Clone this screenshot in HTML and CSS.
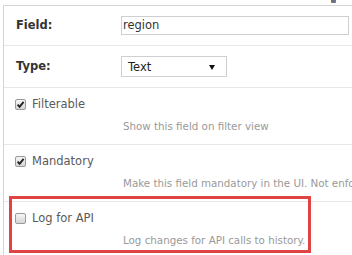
FILE: index.html
```html
<!DOCTYPE html>
<html>
<head>
<meta charset="utf-8">
<link rel="stylesheet" href="styles.css">
</head>
<body>
<div class="topicon"></div>
<div class="panel">
  <div class="row field-row first">
    <label class="flabel">Field:</label>
    <div class="text-input">region</div>
  </div>
  <div class="row field-row second">
    <label class="flabel">Type:</label>
    <div class="select"><span>Text</span><span class="arrow"></span></div>
  </div>
  <div class="row check-row">
    <div class="check-line"><span class="cb checked"><svg viewBox="0 0 11 11" width="11" height="11"><path d="M2.6 5.6 L4.6 7.8 L8.6 2.8" fill="none" stroke="#222" stroke-width="1.9"/></svg></span><span class="clabel">Filterable</span></div>
    <div class="desc">Show this field on filter view</div>
  </div>
  <div class="row check-row">
    <div class="check-line"><span class="cb checked"><svg viewBox="0 0 11 11" width="11" height="11"><path d="M2.6 5.6 L4.6 7.8 L8.6 2.8" fill="none" stroke="#222" stroke-width="1.9"/></svg></span><span class="clabel">Mandatory</span></div>
    <div class="desc">Make this field mandatory in the UI. Not enforced by API.</div>
  </div>
  <div class="row check-row last">
    <div class="check-line"><span class="cb"></span><span class="clabel">Log for API</span></div>
    <div class="desc">Log changes for API calls to history.</div>
    <div class="highlight"></div>
  </div>
</div>
</body>
</html>
```
FILE: styles.css
```css
html, body {
  margin: 0;
  padding: 0;
  background: #fff;
  overflow: hidden;
}
body {
  font-family: "DejaVu Sans", Verdana, sans-serif;
  width: 352px;
  height: 255px;
  position: relative;
}
.topicon {
  position: absolute;
  left: 331px;
  top: 0;
  width: 5px;
  height: 3px;
  background: linear-gradient(90deg, #8a6a4a 0 50%, #5a7aa8 50% 100%);
  border-radius: 0 0 1px 1px;
}
.panel {
  margin: 5px 0 0 3px;
  border-top: 1px solid #d4d4d4;
  border-left: 1px solid #d4d4d4;
  height: 260px;
  overflow: hidden;
}
.row {
  border-bottom: 1px solid #e8e8e8;
  position: relative;
}
.field-row {
  display: grid;
  grid-template-columns: 105px 1fr;
  align-items: start;
  padding-left: 12px;
  box-sizing: border-box;
  padding-top: 10px;
}
.first {
  height: 40px;
}
.second {
  height: 42px;
}
.flabel {
  font-weight: bold;
  font-size: 11.5px;
  color: #333;
  line-height: 19px;
}
.second .flabel {
  line-height: 21px;
}
.text-input {
  box-sizing: border-box;
  width: 228px;
  height: 19px;
  border: 1px solid #cfcfcf;
  padding: 0 1px;
  font-size: 11.5px;
  line-height: 17px;
  color: #333;
  background: #fff;
}
.select {
  box-sizing: border-box;
  width: 106px;
  height: 21px;
  border: 1px solid #cfcfcf;
  display: flex;
  align-items: center;
  justify-content: space-between;
  padding: 0 11px 0 6px;
  font-size: 11.5px;
  color: #222;
}
.arrow {
  width: 0;
  height: 0;
  border-left: 3px solid transparent;
  border-right: 3px solid transparent;
  border-top: 5px solid #111;
  margin-top: 1px;
}
.check-row {
  height: 57px;
  box-sizing: border-box;
  padding-top: 8px;
}
.check-row.last {
  border-bottom: none;
  overflow: visible;
}
.check-line {
  display: flex;
  align-items: center;
  height: 16px;
  padding-left: 11px;
}
.cb {
  box-sizing: border-box;
  width: 11px;
  height: 11px;
  border: 1px solid #9a9a9a;
  border-radius: 2px;
  background: linear-gradient(#f6f6f6, #d6d6d6);
  margin-right: 6px;
  position: relative;
  flex: none;
}
.cb svg {
  position: absolute;
  left: -1px;
  top: -1px;
}
.clabel {
  font-size: 11.5px;
  color: #5a5a5a;
  line-height: 16px;
}
.desc {
  margin-top: 7px;
  padding-left: 119px;
  font-size: 10.3px;
  line-height: 14px;
  color: #999;
  white-space: nowrap;
  overflow: hidden;
}
.highlight {
  position: absolute;
  left: 5px;
  top: -6px;
  width: 302px;
  height: 57px;
  box-sizing: border-box;
  border: 3px solid #e04343;
}
```
